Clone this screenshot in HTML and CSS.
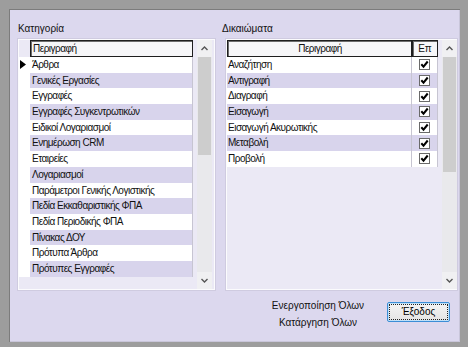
FILE: index.html
```html
<!DOCTYPE html>
<html lang="el">
<head>
    <meta charset="UTF-8">
    <title>Δικαιώματα Χρήστη</title>
    <link rel="stylesheet" href="styles.css">
</head>
<body>
<div class="window">
    <div class="panels">
        <div class="panel">
            <div class="caption">Κατηγορία</div>
            <div class="listbox">
                <div class="grid cats">
                    <div class="row head">
                        <span class="ind"></span>
                        <span class="cell hcell">Περιγραφή</span>
                    </div>
                    <div class="row"><span class="ind"><svg width="6" height="9" viewBox="0 0 6 9"><polygon points="0,0 6,4.5 0,9" fill="#000"/></svg></span><span class="cell">Άρθρα</span></div>
                    <div class="row alt"><span class="ind"></span><span class="cell">Γενικές Εργασίες</span></div>
                    <div class="row"><span class="ind"></span><span class="cell">Εγγραφές</span></div>
                    <div class="row alt"><span class="ind"></span><span class="cell">Εγγραφές Συγκεντρωτικών</span></div>
                    <div class="row"><span class="ind"></span><span class="cell">Ειδικοί Λογαριασμοί</span></div>
                    <div class="row alt"><span class="ind"></span><span class="cell">Ενημέρωση CRM</span></div>
                    <div class="row"><span class="ind"></span><span class="cell">Εταιρείες</span></div>
                    <div class="row alt"><span class="ind"></span><span class="cell">Λογαριασμοί</span></div>
                    <div class="row"><span class="ind"></span><span class="cell">Παράμετροι Γενικής Λογιστικής</span></div>
                    <div class="row alt"><span class="ind"></span><span class="cell">Πεδία Εκκαθαριστικής ΦΠΑ</span></div>
                    <div class="row"><span class="ind"></span><span class="cell">Πεδία Περιοδικής ΦΠΑ</span></div>
                    <div class="row alt"><span class="ind"></span><span class="cell">Πίνακας ΔΟΥ</span></div>
                    <div class="row"><span class="ind"></span><span class="cell">Πρότυπα Άρθρα</span></div>
                    <div class="row alt"><span class="ind"></span><span class="cell">Πρότυπες Εγγραφές</span></div>
                </div>
                <div class="vscroll">
                    <span class="arrow"><svg width="7" height="5" viewBox="0 0 7 5"><polyline points="0.5,4 3.5,1 6.5,4" fill="none" stroke="#555" stroke-width="1.4"/></svg></span>
                    <span class="thumb thumb-cats"></span>
                    <span class="track"></span>
                    <span class="arrow"><svg width="7" height="5" viewBox="0 0 7 5"><polyline points="0.5,1 3.5,4 6.5,1" fill="none" stroke="#555" stroke-width="1.4"/></svg></span>
                </div>
            </div>
        </div>
        <div class="panel">
            <div class="caption shifted">Δικαιώματα</div>
            <div class="listbox">
                <div class="grid rights">
                    <div class="row head">
                        <span class="cell hcell center">Περιγραφή</span>
                        <span class="cell hcell chk">Επ</span>
                    </div>
                    <div class="row"><span class="cell">Αναζήτηση</span><span class="cell chk"><i class="check"></i></span></div>
                    <div class="row alt"><span class="cell">Αντιγραφή</span><span class="cell chk"><i class="check"></i></span></div>
                    <div class="row"><span class="cell">Διαγραφή</span><span class="cell chk"><i class="check"></i></span></div>
                    <div class="row alt"><span class="cell">Εισαγωγή</span><span class="cell chk"><i class="check"></i></span></div>
                    <div class="row"><span class="cell">Εισαγωγή Ακυρωτικής</span><span class="cell chk"><i class="check"></i></span></div>
                    <div class="row alt"><span class="cell">Μεταβολή</span><span class="cell chk"><i class="check"></i></span></div>
                    <div class="row"><span class="cell">Προβολή</span><span class="cell chk"><i class="check"></i></span></div>
                </div>
                <div class="vscroll">
                    <span class="arrow"><svg width="7" height="5" viewBox="0 0 7 5"><polyline points="0.5,4 3.5,1 6.5,4" fill="none" stroke="#555" stroke-width="1.4"/></svg></span>
                    <span class="thumb thumb-rights"></span>
                    <span class="track"></span>
                    <span class="arrow"><svg width="7" height="5" viewBox="0 0 7 5"><polyline points="0.5,1 3.5,4 6.5,1" fill="none" stroke="#555" stroke-width="1.4"/></svg></span>
                </div>
            </div>
        </div>
    </div>
    <div class="footer">
        <div class="actions">
            <a href="#">Ενεργοποίηση Όλων</a>
            <a href="#">Κατάργηση Όλων</a>
        </div>
        <button class="btn" type="button"><span>Έξοδος</span></button>
    </div>
</div>
</body>
</html>
```

FILE: styles.css
```css
body{margin:0;background:#fff;font:10px "Liberation Sans",Arial,sans-serif;color:#000;}
.window{
    box-sizing:border-box;
    height:347px;
    border-style:solid;
    border-color:#9d9d9d;
    border-width:9px 8px 5px 9px;
    box-shadow:inset 1px 1px 0 #7c7c7c, inset -1px -1px 0 #c9c6da;
    background:#dcd8ee;
    padding:13px 3px 0 9px;
    display:flex;
    flex-direction:column;
}
.panels{display:grid;grid-template-columns:197px 231px;column-gap:11px;}
.caption{height:14px;line-height:14px;margin-bottom:3px;color:#111;}
.caption.shifted{margin-left:-4px;}
.listbox{
    box-sizing:border-box;
    height:251px;
    display:flex;
    background:#ebe9f5;
    border:1px solid #fbfbfd;
    box-shadow:0 0 0 1px #cfcbe0;
}
.grid{flex:1;font-size:10px;letter-spacing:-0.5px;color:#111;}
.row{display:flex;height:15.7px;line-height:15.7px;background:#fff;}
.row.alt{background:#d8d4ec;}
.row.head{height:17px;line-height:15px;background:transparent;}
.ind{width:11px;flex:none;display:flex;align-items:center;padding-left:1px;box-sizing:border-box;background:#fff;}
.head .ind{background:transparent;}
.cell{box-sizing:border-box;padding-left:2px;white-space:nowrap;overflow:hidden;border-right:1px solid #c7c5d2;}
.cats .cell{width:163px;}
.rights .cell{width:185px;padding-left:1px;}
.rights .cell.chk{width:26px;display:flex;align-items:center;justify-content:center;padding:0;letter-spacing:0;}
.hcell{
    background:#f6f6f8;
    border:1px solid #1e1e1e;
    box-shadow:inset 1px 1px 0 #6d6d6d;
}
.hcell.center{text-align:center;}
.rights .hcell.chk{border:1px solid #1e1e1e;}
.check{
    display:block;
    width:11px;height:11px;
    box-sizing:border-box;
    border:1px solid #6a6a6a;
    background:#fff url("data:image/svg+xml,%3Csvg xmlns='http://www.w3.org/2000/svg' width='9' height='9' viewBox='0 0 9 9'%3E%3Cpolyline points='1.3,4.3 3.5,6.7 7.7,1.5' fill='none' stroke='%23000' stroke-width='2'/%3E%3C/svg%3E") center/9px 9px no-repeat;
}
.vscroll{
    width:15px;flex:none;
    margin:0 2px 0 4px;
    display:flex;flex-direction:column;
    background:#e9e9ec;
}
.arrow{height:17px;flex:none;display:flex;align-items:center;justify-content:center;background:#f0f0f2;}
.thumb{flex:none;background:#cdcdcd;margin:0 1px;}
.thumb-cats{height:98px;}
.thumb-rights{height:115px;}
.track{flex:1;}
.footer{display:flex;justify-content:flex-end;align-items:flex-start;padding:7px 7px 0 0;}
.actions{width:112px;display:flex;flex-direction:column;align-items:center;margin-right:13px;}
.actions a{line-height:17px;color:#111;text-decoration:none;}
.btn{
    width:63px;height:20px;margin-top:5px;padding:2px;
    font:inherit;color:#000;
    border:1px solid #3b8ed6;
    border-radius:2px;
    background:linear-gradient(#f4f4f4,#e4e4e4);
    box-shadow:inset 0 0 0 1px #bfe0f8;
}
.btn span{display:block;height:100%;line-height:14px;outline:1px dotted #222;}
```
